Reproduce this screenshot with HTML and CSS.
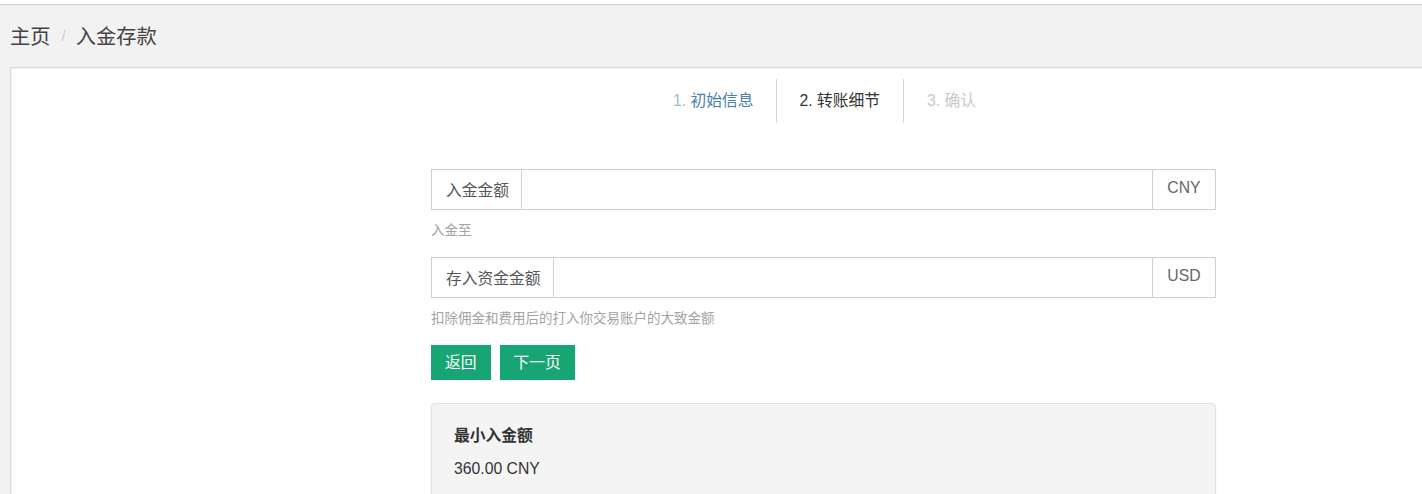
FILE: index.html
```html
<!DOCTYPE html>
<html lang="zh">
<head>
<meta charset="utf-8">
<title>入金存款</title>
<link rel="stylesheet" href="styles.css">
</head>
<body>
<div class="topgap"></div>
<div class="page">
  <div class="breadcrumb">
    <span class="crumb">主页</span>
    <span class="crumb-sep">/</span>
    <span class="crumb current">入金存款</span>
  </div>
  <div class="card">
    <div class="content">
      <div class="steps">
        <div class="step done"><span class="num">1.</span> 初始信息</div>
        <div class="step active">2. 转账细节</div>
        <div class="step todo">3. 确认</div>
      </div>
      <form class="form">
        <div class="input-group">
          <span class="addon">入金金额</span>
          <input class="field" type="text">
          <span class="addon right">CNY</span>
        </div>
        <div class="help">入金至</div>
        <div class="input-group">
          <span class="addon">存入资金金额</span>
          <input class="field" type="text">
          <span class="addon right">USD</span>
        </div>
        <div class="help">扣除佣金和费用后的打入你交易账户的大致金额</div>
        <div class="buttons">
          <button type="button" class="btn">返回</button>
          <button type="button" class="btn">下一页</button>
        </div>
        <div class="panel">
          <div class="panel-title">最小入金额</div>
          <div class="panel-value">360.00 CNY</div>
        </div>
      </form>
    </div>
  </div>
</div>
</body>
</html>
```
FILE: styles.css
```css
html, body {
  margin: 0;
  padding: 0;
  height: 100%;
}
body {
  font-family: "Liberation Sans", "Noto Sans CJK SC", sans-serif;
  font-size: 15.75px;
  color: #333;
  background: #fff;
  overflow: hidden;
}
.topgap {
  height: 4px;
  background: #fff;
}
.page {
  border-top: 1px solid #cfcfcf;
  background: #f2f2f2;
  min-height: 600px;
}
.breadcrumb {
  height: 62px;
  display: flex;
  align-items: center;
  padding: 0 10px 2px;
  box-sizing: border-box;
  font-size: 20.25px;
  color: #444;
}
.crumb-sep {
  color: #ccc;
  font-size: 15px;
  margin: 0 10px 0 11px;
}
.card {
  margin-left: 10px;
  background: #fff;
  border: 1px solid #d9d9d9;
  border-right: none;
  min-height: 500px;
  box-shadow: inset 1px 1px 0 #f3f3f3;
}
.content {
  margin-left: 420px;
  width: 785px;
  padding-top: 11px;
}
.steps {
  display: flex;
  justify-content: center;
  margin-left: 3px;
}
.step {
  height: 44px;
  line-height: 44px;
  padding: 0 23px;
  font-size: 15.75px;
}
.step.done {
  padding: 0 22px 0 22px;
}
.step + .step {
  border-left: 1px solid #d6d6d6;
}
.step.done {
  color: #4a80ab;
}
.step.done .num {
  color: #9fbad0;
}
.step.active {
  color: #333;
}
.step.todo {
  color: #c8c8c8;
}
.form {
  margin: 46px 0 0;
}
.input-group {
  display: flex;
  height: 41px;
  box-sizing: border-box;
  border: 1px solid #cfcfcf;
  background: #fff;
}
.addon {
  display: flex;
  align-items: center;
  padding: 0 12px 0 14px;
  color: #555;
  border-right: 1px solid #cfcfcf;
  white-space: nowrap;
}
.addon.right {
  border-right: none;
  border-left: 1px solid #cfcfcf;
  padding: 0 14px 4px 14px;
  width: 34px;
  justify-content: center;
  color: #666;
}
.field {
  flex: 1;
  border: none;
  outline: none;
  min-width: 0;
  font: inherit;
  padding: 0 12px;
  background: #fff;
}
.help {
  margin: 11px 0 16px;
  height: 20px;
  line-height: 20px;
  font-size: 13.5px;
  color: #a3a3a3;
}
.buttons {
  display: flex;
  gap: 9px;
}
.btn {
  height: 35px;
  padding: 0 14px 2px;
  border: none;
  border-radius: 0;
  background: #17a673;
  color: #fff;
  font: inherit;
  font-size: 15.75px;
}
.panel {
  margin-top: 23px;
  background: #f4f4f4;
  border: 1px solid #e2e2e2;
  border-radius: 4px;
  box-shadow: 0 1px 2px rgba(0, 0, 0, 0.08);
  padding: 21px 22px 30px;
  min-height: 120px;
}
.panel-title {
  font-weight: bold;
  line-height: 22px;
  color: #333;
}
.panel-value {
  margin-top: 11px;
  line-height: 22px;
  color: #333;
}
```
